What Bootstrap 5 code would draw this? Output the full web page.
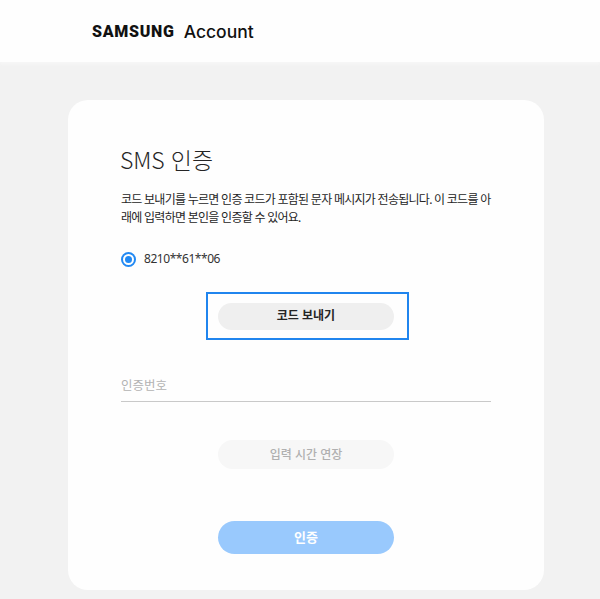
<!doctype html>
<html lang="ko">
<head>
<meta charset="utf-8">
<link href="https://cdn.jsdelivr.net/npm/bootstrap@5.3.0/dist/css/bootstrap.min.css" rel="stylesheet">
<style>
html,body{height:100%;overflow:hidden}
body{background:#f2f2f2;font-family:"Noto Sans","Noto Sans CJK KR",sans-serif;color:#252525}
.top-strip{height:62px;background:#fefefe;padding:2px 0 0 92px;box-shadow:0 2px 3px #f7f7f7}
.brand-a{font-family:Roboto,sans-serif;font-weight:900;font-size:16px;letter-spacing:.7px;color:#111}
.brand-b{font-family:Inter,sans-serif;font-weight:500;font-size:17.5px;color:#111;margin-left:9px}
.panel{width:476px;height:490px;margin:38px 0 0 68px;background:#fefefe;border-radius:20px;padding:43px 53px 0 53px}
.panel-title{font-family:"Noto Sans CJK KR",sans-serif;font-weight:300;font-size:23px;line-height:32px;margin:0 0 16px -1px;color:#252525;letter-spacing:-.1px}
.panel-text{font-size:12px;line-height:18px;margin:0 0 23px;color:#252525;letter-spacing:-.72px;word-break:break-all}
.dot-ring{width:15px;height:15px;border:2px solid #2189f3;border-radius:50%;padding:2px}
.dot-core{width:100%;height:100%;border-radius:50%;background:#2189f3}
.phone{font-size:12px;color:#333;line-height:18px;letter-spacing:-.45px}
.focus-box{width:203px;height:48px;margin:24px 0 0 85px;border:2px solid #2085ee;padding:0 10px}
.pill{width:176px;border:0;border-radius:20px;font-size:12px;font-weight:700;padding:0;display:block}
.pill-send{height:27px;background:#efefef;color:#252525}
.code-field{margin-top:32px;height:30px;border:0;border-bottom:1px solid #c9c9c9;border-radius:0;padding:0 0 3px;font-size:12.5px;background:transparent;box-shadow:none}
.code-field::placeholder{color:#b3b3b3}
.pill-ext{height:29px;margin:38px 0 0 97px;background:#f7f7f7;color:#b0b0b0;font-weight:500}
.pill-ok{height:33px;margin:52px 0 0 97px;background:#99c9fd;color:#fff;font-size:13px}
</style>
</head>
<body>
<header class="top-strip d-flex align-items-center">
  <span class="brand-a">SAMSUNG</span><span class="brand-b">Account</span>
</header>
<main class="panel">
  <h1 class="panel-title">SMS 인증</h1>
  <p class="panel-text">코드 보내기를 누르면 인증 코드가 포함된 문자 메시지가 전송됩니다. 이 코드를 아래에 입력하면 본인을 인증할 수 있어요.</p>
  <div class="d-flex align-items-center gap-2">
    <span class="dot-ring"><span class="dot-core d-block"></span></span>
    <span class="phone">8210**61**06</span>
  </div>
  <div class="focus-box d-flex align-items-center">
    <button type="button" class="pill pill-send">코드 보내기</button>
  </div>
  <input class="form-control code-field" type="text" placeholder="인증번호">
  <button type="button" class="pill pill-ext">입력 시간 연장</button>
  <button type="button" class="pill pill-ok">인증</button>
</main>
<script src="https://cdn.jsdelivr.net/npm/bootstrap@5.3.0/dist/js/bootstrap.bundle.min.js"></script>
</body>
</html>
